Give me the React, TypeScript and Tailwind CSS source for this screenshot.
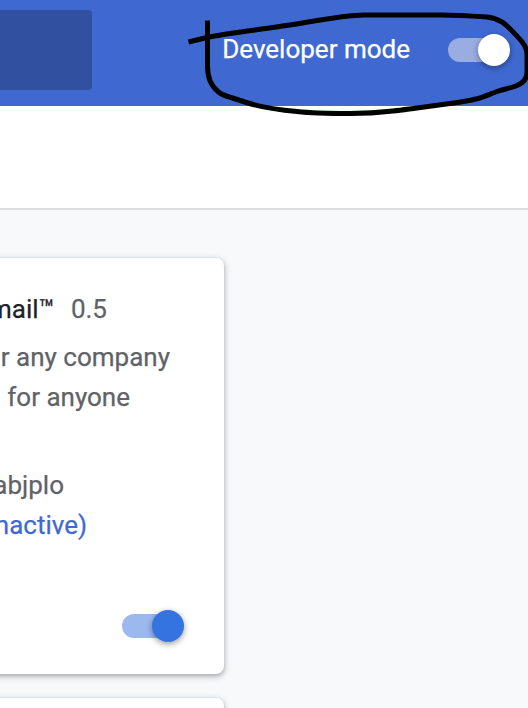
function Toggle({ track, knob }: { track: string; knob: string }) {
  return (
    <div className={`flex h-6 w-[60px] items-center justify-end rounded-full ${track}`}>
      <div
        className={`-mr-0.5 size-8 shrink-0 rounded-full shadow-[0_2px_6px_rgba(0,0,0,0.4)] ${knob}`}
      />
    </div>
  );
}

function Header() {
  return (
    <header className="flex h-[106px] items-start justify-between bg-[#3f69d1]">
      <div className="mt-2.5 h-20 w-[92px] rounded-r-[4px] bg-[#3151a0]" />
      <div className="mt-[30px] mr-5 flex h-10 items-center">
        <span className="mr-[38px] whitespace-nowrap pb-0.5 text-[26px] leading-[38px] text-white">
          Developer mode
        </span>
        <Toggle track="bg-[#9aade3]" knob="bg-white" />
      </div>
    </header>
  );
}

function Drawing() {
  return (
    <svg
      className="pointer-events-none absolute top-0 left-0"
      width="528"
      height="125"
      viewBox="0 0 528 125"
      fill="none"
      stroke="#000"
      strokeWidth="5"
      strokeLinejoin="round"
    >
      <path d="M207.500 20.500V66C207.500 78 211 86 218 91.500C222 95 227 96.500 231 97.500L248 103C262 107.500 280 110 297 111.500C310 113 335 113.500 350 113.500C365 113.500 380 112.500 393 111C402 110 409 109 417 108L450 103.500C462 102 470 100.500 478 98.500C485 96.500 490 94 497 91.500C504 89 511 88 517 85.500C523 83 527 79 527 72V55C527 46 522 42 517 36C512 31 507 25 502 22C497 19 493 17.500 487 17C472 16 455 15 440 15H365C346 15 320 20 293 24.500C265 29 222 34 207 37.500L188.500 42" />
    </svg>
  );
}

function Card() {
  return (
    <section className="-ml-8 h-[416px] w-64 rounded-r-lg bg-white pt-[31px] pl-8 shadow-[0_2px_4px_rgba(60,64,67,0.3),0_2px_6px_2px_rgba(60,64,67,0.15)]">
      <div className="flex h-10 w-[107px] justify-end gap-4 whitespace-nowrap text-[26px] leading-10">
        <span className="text-[#202124]">mail™</span>
        <span>0.5</span>
      </div>
      <div className="mt-2 whitespace-nowrap text-[26px] leading-10">
        <div className="flex w-[170px] justify-end">r any company</div>
        <div className="flex w-[130px] justify-end">for anyone</div>
      </div>
      <div className="mt-12 whitespace-nowrap text-[26px] leading-10">
        <div className="flex w-16 justify-end">abjplo</div>
        <div className="flex w-[87px] justify-end text-[#3f69d1]">nactive)</div>
      </div>
      <div className="mt-[69px] flex w-[182px] justify-end">
        <Toggle track="bg-[#9bb9ef]" knob="bg-[#3574e0]" />
      </div>
    </section>
  );
}

export default function App() {
  return (
    <div className="relative h-[708px] w-[528px] overflow-hidden bg-[#f8f9fb] font-[Roboto,sans-serif] text-[#5f6368] [-webkit-text-stroke:0.25px]">
      <Header />
      <div className="h-[104px] border-b-2 border-[#dddee0] bg-white" />
      <main className="flex flex-col gap-6 pt-12">
        <Card />
        <section className="-ml-8 h-20 w-64 rounded-tr-lg bg-white shadow-[0_2px_4px_rgba(60,64,67,0.3),0_2px_6px_2px_rgba(60,64,67,0.15)]" />
      </main>
      <Drawing />
    </div>
  );
}
